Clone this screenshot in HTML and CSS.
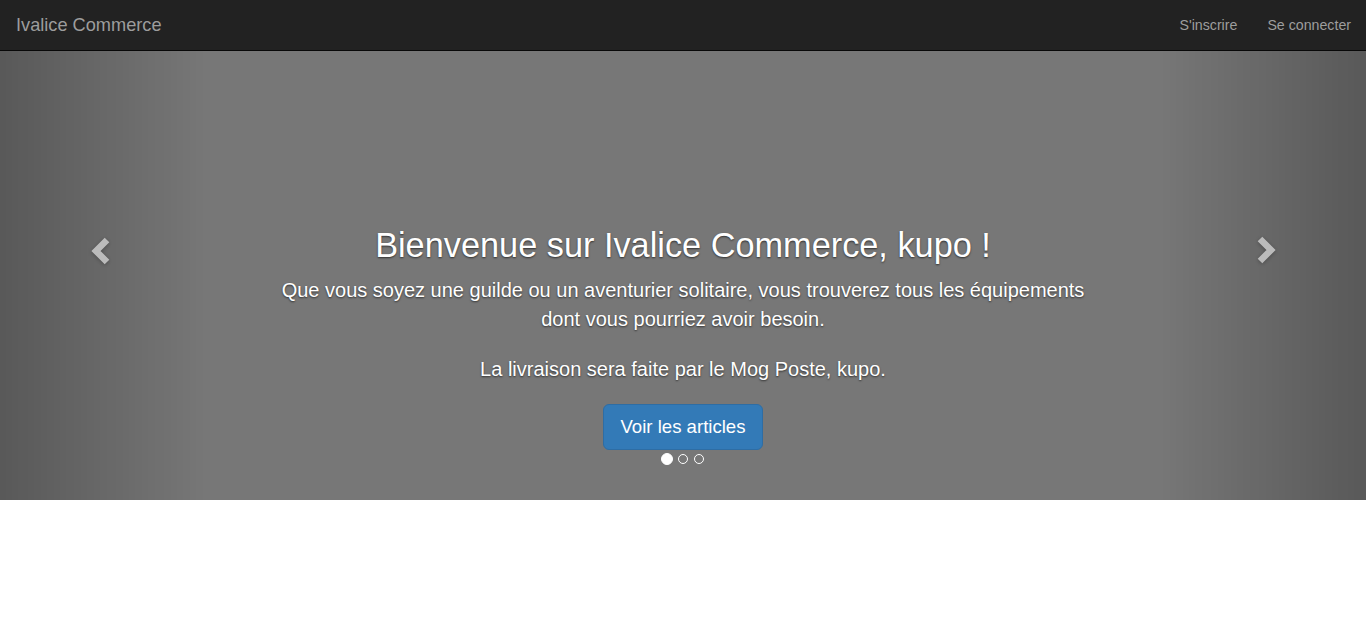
FILE: index.html
```html
<!DOCTYPE html>
<html lang="fr">
<head>
<meta charset="utf-8">
<title>Ivalice Commerce</title>
<link rel="stylesheet" href="styles.css">
</head>
<body>
<nav class="navbar">
  <a class="brand" href="#">Ivalice Commerce</a>
  <ul class="nav-right">
    <li><a href="#">S'inscrire</a></li>
    <li><a href="#">Se connecter</a></li>
  </ul>
</nav>
<div class="carousel">
  <div class="slide"></div>
  <div class="caption">
    <h1>Bienvenue sur Ivalice Commerce, kupo !</h1>
    <p class="lead">Que vous soyez une guilde ou un aventurier solitaire, vous trouverez tous les équipements dont vous pourriez avoir besoin.</p>
    <p class="lead">La livraison sera faite par le Mog Poste, kupo.</p>
    <a class="btn" href="#">Voir les articles</a>
  </div>
  <a class="control left" href="#">
    <svg class="chev" width="20" height="28" viewBox="0 0 20 28"><polyline points="17,3 6,14 17,25" fill="none" stroke="#fff" stroke-width="6.5" stroke-linejoin="miter"/></svg>
  </a>
  <a class="control right" href="#">
    <svg class="chev" width="20" height="28" viewBox="0 0 20 28"><polyline points="3,3 14,14 3,25" fill="none" stroke="#fff" stroke-width="6.5" stroke-linejoin="miter"/></svg>
  </a>
  <ol class="indicators">
    <li class="active"></li>
    <li></li>
    <li></li>
  </ol>
</div>
</body>
</html>
```

FILE: styles.css
```css
* { box-sizing: border-box; }
html, body { margin: 0; padding: 0; }
body {
  font-family: "Liberation Sans", Arial, sans-serif;
  font-size: 14px;
  line-height: 1.42857143;
  color: #333;
  background: #fff;
}
a { text-decoration: none; }

.navbar {
  display: flex;
  justify-content: space-between;
  align-items: stretch;
  height: 51px;
  background: #222;
  border-bottom: 1px solid #080808;
}
.brand {
  padding: 15px 15px 15px 16px;
  font-size: 18.2px;
  line-height: 20px;
  height: 50px;
  color: #9d9d9d;
}
.nav-right {
  display: flex;
  list-style: none;
  margin: 0;
  padding: 0;
}
.nav-right a {
  display: block;
  padding: 15px;
  font-size: 14.2px;
  line-height: 20px;
  color: #9d9d9d;
}

.carousel {
  position: relative;
  height: 449px;
  overflow: hidden;
}
.slide {
  height: 100%;
  background: #777;
}
.caption {
  position: absolute;
  left: 20%;
  right: 20%;
  bottom: 20px;
  padding: 20px 0 30px;
  text-align: center;
  color: #fff;
  text-shadow: 0 1px 2px rgba(0,0,0,.6);
  z-index: 10;
}
.caption h1 {
  margin: 20px 0 10px;
  font-size: 34.3px;
  font-weight: 500;
  line-height: 39.6px;
}
.lead {
  margin: 0 0 20px;
  font-size: 20px;
  line-height: 29.4px;
}
.btn {
  display: inline-block;
  padding: 10px 16px;
  font-size: 18.6px;
  line-height: 24px;
  border-radius: 6px;
  color: #fff;
  background: #337ab7;
  border: 1px solid #2e6da4;
  text-shadow: none;
  vertical-align: top;
}

.control {
  position: absolute;
  top: 0;
  bottom: 0;
  width: 15%;
  opacity: .5;
  display: flex;
  align-items: flex-start;
  justify-content: center;
  padding-top: 186px;
}
.control.left {
  left: 0;
  background: linear-gradient(to right, rgba(0,0,0,.5) 0, rgba(0,0,0,.0001) 100%);
}
.control.right {
  right: 0;
  background: linear-gradient(to right, rgba(0,0,0,.0001) 0, rgba(0,0,0,.5) 100%);
}
.chev {
  display: block;
  filter: drop-shadow(0 1px 2px rgba(0,0,0,.6));
}
.control.left .chev { margin-left: -5px; }
.control.right .chev { margin-left: 6px; margin-top: -1px; }

.indicators {
  position: absolute;
  bottom: 20px;
  left: 50%;
  width: 60%;
  margin: 0 0 10px -30%;
  padding: 0;
  list-style: none;
  text-align: center;
  line-height: 20px;
  z-index: 15;
}
.indicators li {
  display: inline-block;
  width: 10px;
  height: 10px;
  margin: 1px;
  border: 1px solid #fff;
  border-radius: 10px;
}
.indicators li.active {
  width: 12px;
  height: 12px;
  margin: 0;
  background: #fff;
}
```
